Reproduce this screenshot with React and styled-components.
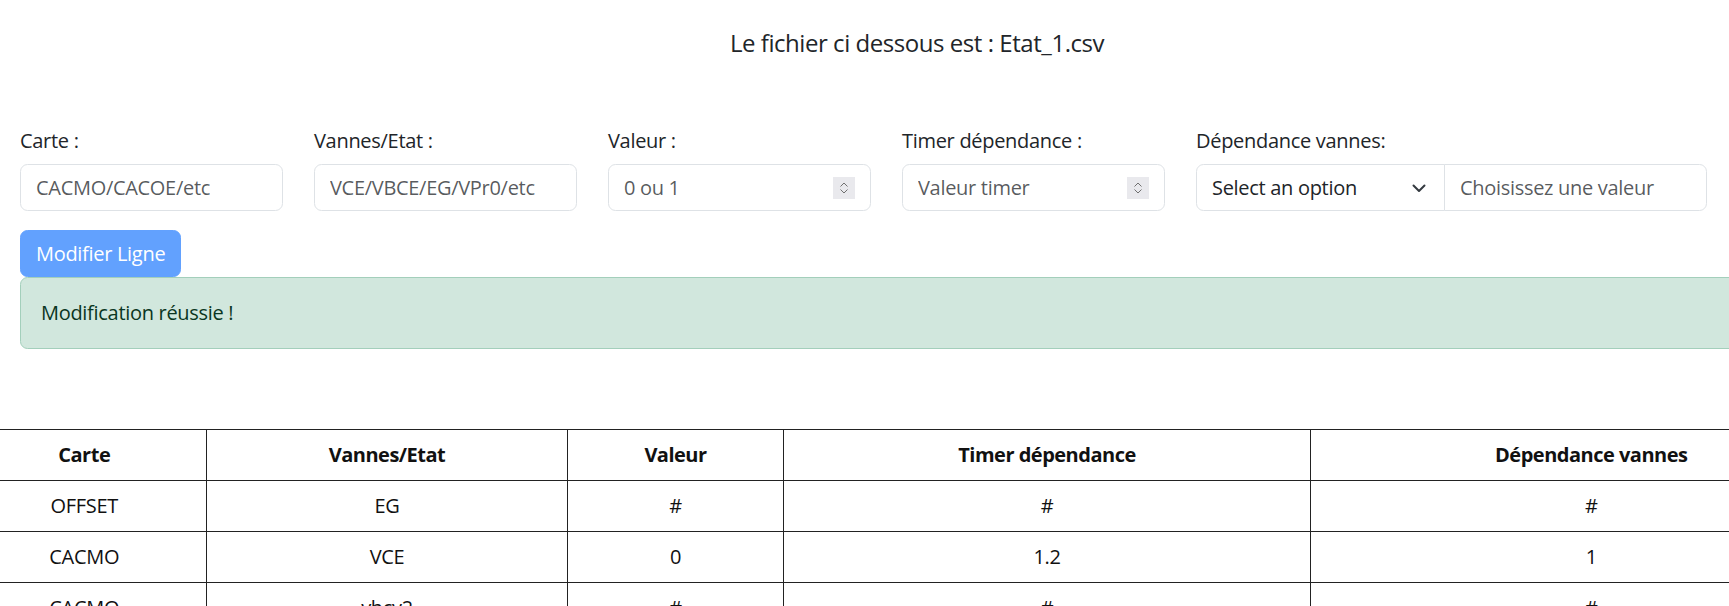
import React from "react";
import styled, { createGlobalStyle } from "styled-components";

const GlobalStyle = createGlobalStyle`
    body {
        margin: 0;
        font-family: "Open Sans", "Noto Sans", sans-serif;
        font-size: 20px;
        line-height: 1.5;
        color: #212529;
        background: #fff;
        overflow-x: hidden;
    }
`;

const Page = styled.main`
    width: 1834px;
    box-sizing: border-box;
    padding: 28px 20px 0;
    display: flex;
    flex-direction: column;
`;

const Title = styled.h5`
    margin: 0;
    font-size: 24px;
    font-weight: 400;
    line-height: 30px;
    text-align: center;
    letter-spacing: -0.45px;
`;

const FormRow = styled.div`
    display: flex;
    gap: 31px;
    margin-top: 68px;
`;

const Field = styled.div`
    display: flex;
    flex-direction: column;
    width: ${(p) => (p.$wide ? "auto" : "263px")};
`;

const Label = styled.label`
    line-height: 30px;
    margin-bottom: 8px;
    letter-spacing: -0.3px;
`;

const TextInput = styled.input`
    box-sizing: border-box;
    width: ${(p) => p.$width || "263px"};
    height: 47px;
    padding: 0 15px;
    border: 1px solid #dee2e6;
    border-radius: ${(p) => p.$radius || "7.5px"};
    margin-left: ${(p) => (p.$joined ? "-1px" : "0")};
    font: inherit;
    letter-spacing: -0.3px;
    color: #212529;
    outline: none;

    &::placeholder {
        color: rgba(33, 37, 41, 0.75);
    }
`;

const NumberBox = styled.div`
    box-sizing: border-box;
    display: flex;
    align-items: center;
    width: 263px;
    height: 47px;
    padding: 0 15px;
    border: 1px solid #dee2e6;
    border-radius: 7.5px;
`;

const BareInput = styled.input`
    flex: 1;
    min-width: 0;
    border: none;
    outline: none;
    padding: 0;
    font: inherit;
    letter-spacing: -0.3px;
    background: transparent;

    &::placeholder {
        color: rgba(33, 37, 41, 0.75);
    }
`;

const Group = styled.div`
    display: flex;
`;

const SelectBox = styled.div`
    box-sizing: border-box;
    display: flex;
    align-items: center;
    justify-content: space-between;
    width: 249px;
    height: 47px;
    padding: 0 18px 0 15px;
    border: 1px solid #dee2e6;
    border-radius: 7.5px 0 0 7.5px;
    letter-spacing: -0.3px;
`;

const Button = styled.button`
    align-self: flex-start;
    margin-top: 19px;
    padding: 7.5px 15px;
    border: 1px solid #62a1fe;
    border-radius: 7.5px;
    background: #62a1fe;
    color: #fff;
    font: inherit;
    line-height: 30px;
    letter-spacing: -0.3px;
`;

const Alert = styled.div`
    padding: 20px;
    border: 1px solid #a3cfbb;
    border-radius: 7.5px;
    background: #d1e7dd;
    color: #0a3622;
    line-height: 30px;
    letter-spacing: -0.3px;
`;

const TableWrap = styled.div`
    display: flex;
    justify-content: center;
    margin-top: 80px;
`;

const Table = styled.table`
    flex-shrink: 0;
    width: 1910px;
    table-layout: fixed;
    border-collapse: collapse;
    color: #111;
    letter-spacing: -0.3px;

    th,
    td {
        border: 1px solid #222;
        padding: 10px;
        line-height: 30px;
        text-align: center;
    }

    th {
        font-weight: 700;
        letter-spacing: -0.5px;
    }
`;

function Spinner() {
    return (
        <svg width="22" height="22" viewBox="0 0 22 22">
            <rect width="22" height="22" fill="#e9e9ed" />
            <path d="M7.5 9.5l3.5-3.5 3.5 3.5M7.5 12.5l3.5 3.5 3.5-3.5" fill="none" stroke="#707070" strokeWidth="1" />
        </svg>
    );
}

function Chevron() {
    return (
        <svg width="14" height="10" viewBox="0 0 14 10">
            <path d="M1.5 2.5l5.5 5.5 5.5-5.5" fill="none" stroke="#343a40" strokeWidth="2" strokeLinecap="round" strokeLinejoin="round" />
        </svg>
    );
}

const rows = [
    ["OFFSET", "EG", "#", "#", "#"],
    ["CACMO", "VCE", "0", "1.2", "1"],
    ["CACMO", "vbcv2", "#", "#", "#"],
];

const widths = [244.5, 361, 216, 527, 561.5];

function App() {
    return (
        <>
            <GlobalStyle />
            <Page>
                <Title>Le fichier ci dessous est : Etat_1.csv</Title>

                <FormRow>
                    <Field>
                        <Label>Carte :</Label>
                        <TextInput placeholder="CACMO/CACOE/etc" />
                    </Field>
                    <Field>
                        <Label>Vannes/Etat :</Label>
                        <TextInput placeholder="VCE/VBCE/EG/VPr0/etc" />
                    </Field>
                    <Field>
                        <Label>Valeur :</Label>
                        <NumberBox>
                            <BareInput placeholder="0 ou 1" />
                            <Spinner />
                        </NumberBox>
                    </Field>
                    <Field>
                        <Label>Timer dépendance :</Label>
                        <NumberBox>
                            <BareInput placeholder="Valeur timer" />
                            <Spinner />
                        </NumberBox>
                    </Field>
                    <Field $wide>
                        <Label>Dépendance vannes:</Label>
                        <Group>
                            <SelectBox>
                                <span>Select an option</span>
                                <Chevron />
                            </SelectBox>
                            <TextInput $joined $radius="0 7.5px 7.5px 0" placeholder="Choisissez une valeur" />
                        </Group>
                    </Field>
                </FormRow>

                <Button disabled>Modifier Ligne</Button>
                <Alert>Modification réussie !</Alert>

                <TableWrap>
                    <Table>
                        <colgroup>
                            {widths.map((w, i) => (
                                <col key={i} style={{ width: w }} />
                            ))}
                        </colgroup>
                        <thead>
                            <tr>
                                <th>Carte</th>
                                <th>Vannes/Etat</th>
                                <th>Valeur</th>
                                <th>Timer dépendance</th>
                                <th>Dépendance vannes</th>
                            </tr>
                        </thead>
                        <tbody>
                            {rows.map((r, i) => (
                                <tr key={i}>
                                    {r.map((c, j) => (
                                        <td key={j}>{c}</td>
                                    ))}
                                </tr>
                            ))}
                        </tbody>
                    </Table>
                </TableWrap>
            </Page>
        </>
    );
}

export default App;
